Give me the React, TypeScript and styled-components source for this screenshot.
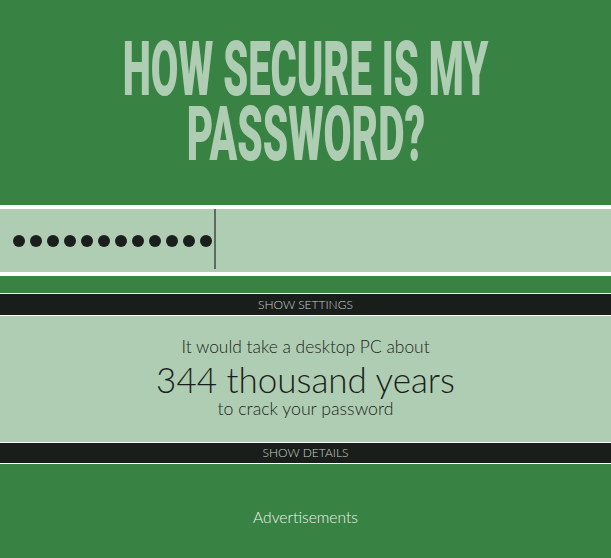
import React from "react";
import styled, { createGlobalStyle } from "styled-components";

const GlobalStyle = createGlobalStyle`
  html, body {
    margin: 0;
    padding: 0;
    background-color: #388243;
    font-family: Lato, "Open Sans", sans-serif;
  }
`;

const Page = styled.div`
  min-height: 558px;
  background-color: #388243;
  overflow: hidden;
`;

const Header = styled.header`
  height: 205px;
  box-sizing: border-box;
  padding-top: 37px;
`;

const Title = styled.h1`
  margin: 0;
  display: flex;
  flex-direction: column;
  align-items: center;
  font-family: Roboto, "Liberation Sans", sans-serif;
  font-weight: 900;
  font-size: 76px;
  line-height: 65px;
  color: #afcdb3;
  text-transform: uppercase;
`;

const TitleLine = styled.span<{ $squeeze: number }>`
  display: block;
  white-space: nowrap;
  transform: scaleX(${(p) => p.$squeeze});
  transform-origin: center;
`;

const PasswordBox = styled.div`
  height: 63px;
  background-color: #afcdb3;
  border-top: 4px solid #ffffff;
  border-bottom: 4px solid #ffffff;
  display: flex;
  align-items: stretch;
  padding-left: 13px;
`;

const Dots = styled.div`
  display: flex;
  align-items: center;
  gap: 5px;
  padding-top: 1px;
`;

const Dot = styled.span`
  width: 12px;
  height: 12px;
  border-radius: 50%;
  background-color: #1b1f1c;
`;

const Caret = styled.span`
  width: 2px;
  margin-left: 2px;
  margin-bottom: 3px;
  background-color: #5f6a61;
`;

const Toggle = styled.div<{ $height: number; $gap?: number }>`
  margin-top: ${(p) => p.$gap ?? 0}px;
  height: ${(p) => p.$height}px;
  line-height: ${(p) => p.$height}px;
  background-color: #1a1e1b;
  border-top: 1px solid #ffffff;
  border-bottom: 1px solid #ffffff;
  color: #c9d3cb;
  font-size: 12px;
  font-weight: 300;
  text-align: center;
  text-transform: uppercase;
`;

const Results = styled.section`
  height: 126px;
  box-sizing: border-box;
  padding-top: 20px;
  background-color: #afcdb3;
  color: #1b1f1c;
  text-align: center;
  font-weight: 300;
`;

const Lead = styled.div`
  font-size: 17.4px;
  line-height: 22px;
`;

const Duration = styled.div`
  margin-top: 1px;
  font-size: 35px;
  line-height: 40px;
`;

const Tail = styled.div`
  font-size: 17.7px;
  line-height: 20px;
`;

const Ads = styled.div`
  margin-top: 44px;
  font-size: 15.6px;
  line-height: 18px;
  font-weight: 300;
  color: #eef3ee;
  text-align: center;
`;

export default function App() {
  const length = 12;
  return (
    <Page>
      <GlobalStyle />
      <Header>
        <Title>
          <TitleLine $squeeze={0.526}>How secure is my</TitleLine>
          <TitleLine $squeeze={0.535}>password?</TitleLine>
        </Title>
      </Header>
      <PasswordBox>
        <Dots>
          {Array.from({ length }).map((_, i) => (
            <Dot key={i} />
          ))}
        </Dots>
        <Caret />
      </PasswordBox>
      <Toggle $height={21} $gap={17}>Show settings</Toggle>
      <Results>
        <Lead>It would take a desktop PC about</Lead>
        <Duration>344 thousand years</Duration>
        <Tail>to crack your password</Tail>
      </Results>
      <Toggle $height={20}>Show details</Toggle>
      <Ads>Advertisements</Ads>
    </Page>
  );
}
